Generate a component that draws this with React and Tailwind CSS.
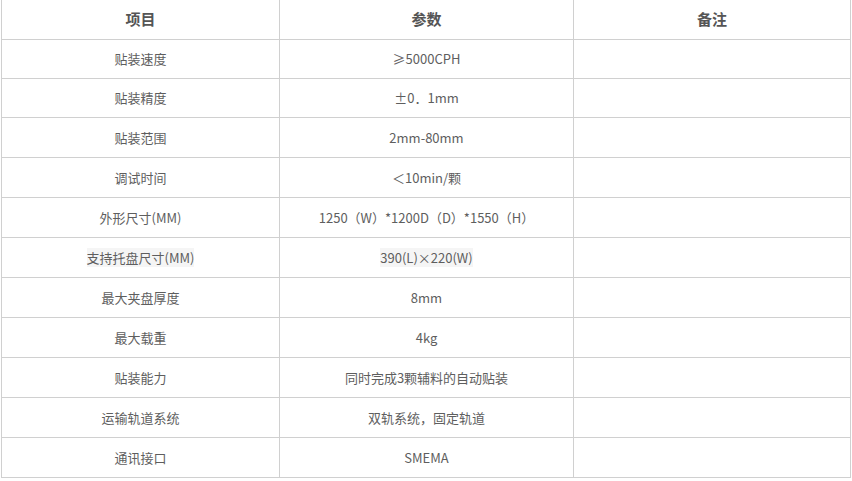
import React from 'react';

const rows = [
    { name: '贴装速度', value: '≥5000CPH', h: 'h-[39px]' },
    { name: '贴装精度', value: '±0．1mm', h: 'h-[39px]' },
    { name: '贴装范围', value: '2mm-80mm', h: 'h-[40px]' },
    { name: '调试时间', value: '＜10min/颗', h: 'h-[40px]' },
    { name: '外形尺寸(MM)', value: '1250（W）*1200D（D）*1550（H）', h: 'h-[40px]' },
    { name: '支持托盘尺寸(MM)', value: '390(L)×220(W)', h: 'h-[40px]', shade: true },
    { name: '最大夹盘厚度', value: '8mm', h: 'h-[40px]' },
    { name: '最大载重', value: '4kg', h: 'h-[40px]' },
    { name: '贴装能力', value: '同时完成3颗辅料的自动贴装', h: 'h-[40px]' },
    { name: '运输轨道系统', value: '双轨系统，固定轨道', h: 'h-[40px]' },
    { name: '通讯接口', value: 'SMEMA', h: 'h-[40px]' },
];

const cell = 'flex items-center justify-center border-r border-b border-[#d0d0d0]';

const App = () => {
    return (
        <div className="w-[852px] h-[481px] bg-white overflow-hidden font-['Noto_Sans_CJK_SC',sans-serif] text-[#5e5e5e]">
            <div className="ml-[1px] w-[850px] border-l border-[#d0d0d0]">
                {/* header */}
                <div className="flex h-[40px] text-[15px] font-bold text-[#555]">
                    <div className={`${cell} w-[278px]`}>项目</div>
                    <div className={`${cell} w-[294px]`}>参数</div>
                    <div className={`${cell} w-[277px]`}>备注</div>
                </div>
                {rows.map(row => (
                    <div key={row.name} className={`flex ${row.h} text-[13px]`}>
                        <div className={`${cell} w-[278px]`}>
                            <span className={row.shade ? 'bg-[#f5f5f5]' : ''}>{row.name}</span>
                        </div>
                        <div className={`${cell} w-[294px]`}>
                            <span className={row.shade ? 'bg-[#f5f5f5]' : ''}>{row.value}</span>
                        </div>
                        <div className={`${cell} w-[277px]`}></div>
                    </div>
                ))}
            </div>
        </div>
    );
};

export default App;
